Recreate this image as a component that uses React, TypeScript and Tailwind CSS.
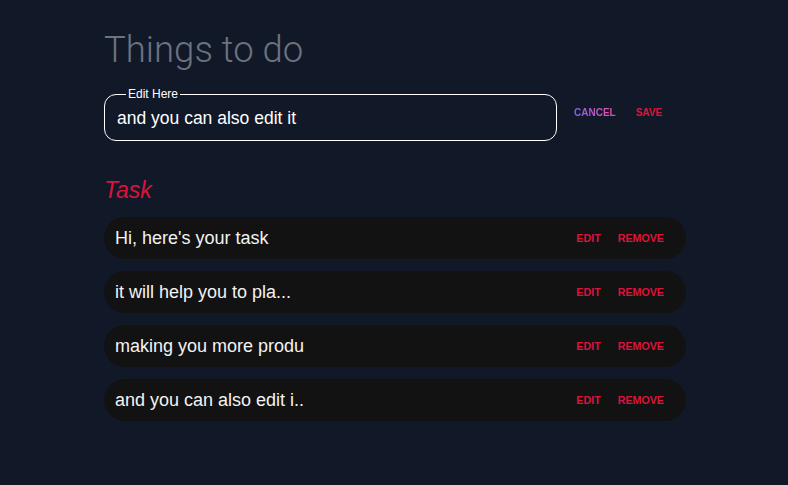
import React, { useState } from "react";

const tasks = [
  "Hi, here's your task",
  "it will help you to pla...",
  "making you more produ",
  "and you can also edit i..",
];

const App: React.FC = () => {
  const [value, setValue] = useState("and you can also edit it");

  return (
    <div
      className="min-h-screen w-full bg-[#111827] text-white"
      style={{ fontFamily: '"Liberation Sans", Arial, sans-serif' }}
    >
      <div className="ml-[104px] w-[582px] pt-[28px]">
        {/* Header */}
        <h1
          className="text-[36.5px] font-light leading-[44px] text-[#6b7280]"
          style={{ fontFamily: "Roboto, sans-serif" }}
        >
          Things to do
        </h1>

        {/* Edit field */}
        <div className="mt-[15px] flex items-center">
          <fieldset className="relative h-[54px] w-[453px] rounded-[12px] border border-white px-[12px] pb-0">
            <legend className="ml-[9px] px-[2px] text-[12px] leading-[14px] text-white">
              Edit Here
            </legend>
            <input
              value={value}
              onChange={(e) => setValue(e.target.value)}
              className="mt-[4px] w-full bg-transparent text-[17.5px] text-white outline-none"
            />
          </fieldset>
          <button className="ml-[17px] mt-[-3px] bg-gradient-to-r from-[#8b5cf6] to-[#ec4899] bg-clip-text text-[10px] font-bold text-transparent">
            CANCEL
          </button>
          <button className="ml-[20px] mt-[-3px] text-[10px] font-bold text-[#dc143c]">
            SAVE
          </button>
        </div>

        {/* Task list */}
        <h2 className="mt-[36px] text-[23px] italic leading-[26px] text-[#dc143c]">
          Task
        </h2>
        <div className="mt-[14px] flex flex-col gap-[12px]">
          {tasks.map((t, i) => (
            <div
              key={i}
              className="flex h-[42px] items-center rounded-full bg-[#121212] pl-[11px] pr-[22px]"
            >
              <span className="flex-1 text-[18px] text-[#f3f3f3]">{t}</span>
              <button className="text-[10.7px] font-bold text-[#dc143c]">EDIT</button>
              <button className="ml-[17px] text-[10.7px] font-bold text-[#dc143c]">
                REMOVE
              </button>
            </div>
          ))}
        </div>
      </div>
    </div>
  );
};

export default App;
